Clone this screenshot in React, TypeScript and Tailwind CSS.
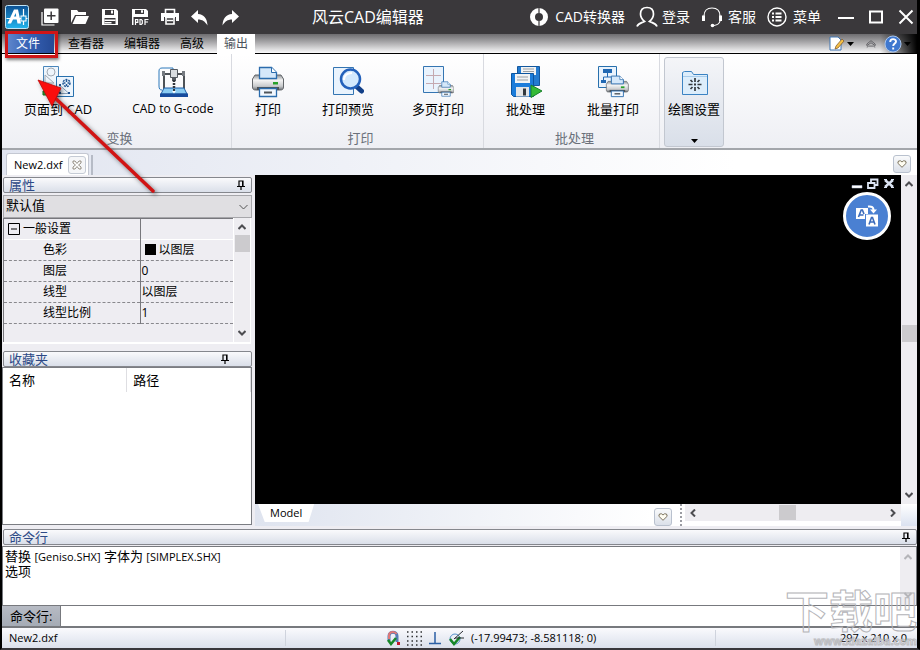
import React from 'react';

const groups = [
  {
    name: '变换',
    className: 'w-[229px] gap-10 pl-[22px]',
    items: [
      { label: '页面到 CAD', icon: <PageToCadIcon /> },
      { label: 'CAD to G-code', icon: <GcodeIcon />, latin: true },
    ],
  },
  {
    name: '打印',
    className: 'w-[251px] gap-[38px] pl-5',
    items: [
      { label: '打印', icon: <PrinterIcon /> },
      { label: '打印预览', icon: <PreviewIcon /> },
      { label: '多页打印', icon: <MultiPageIcon /> },
    ],
  },
  {
    name: '批处理',
    className: 'w-[175px] gap-[42px] pl-[22px]',
    items: [
      { label: '批处理', icon: <BatchIcon /> },
      { label: '批量打印', icon: <BatchPrintIcon /> },
    ],
  },
];

const properties = [
  { name: '色彩', value: '以图层', swatch: true },
  { name: '图层', value: '0' },
  { name: '线型', value: '以图层' },
  { name: '线型比例', value: '1' },
];

export default function App() {
  return (
    <div className="relative flex min-h-screen flex-col overflow-hidden border-r-3 border-b-2 border-l-2 border-black border-b-[#39373c] bg-[#eeedf2] font-['Open_Sans','Noto_Sans_CJK_SC',sans-serif] text-[13px] leading-4 text-black">
      <TitleBar />
      <TabStrip />
      <Ribbon />
      <DocumentTabs />
      <main className="flex flex-1">
        <aside className="flex w-[250px] shrink-0 flex-col pt-[2px] pb-1">
          <PropertiesPanel />
          <FavoritesPanel />
        </aside>
        <Workspace />
      </main>
      <CommandPanel />
      <StatusBar />
      <Watermark />
      <PointerArrow />
    </div>
  );
}

function TitleBar() {
  return (
    <header className="-mr-[3px] flex h-[34px] shrink-0 items-center bg-[#3a383b] pl-[3px] text-white">
      <svg className="h-6 w-6" viewBox="0 0 24 24">
        <defs>
          <linearGradient id="logo" x1="0" y1="0" x2="0" y2="1">
            <stop offset="0" stopColor="#0b4f93" />
            <stop offset="1" stopColor="#22b5ee" />
          </linearGradient>
        </defs>
        <rect x="0.5" y="0.5" width="23" height="23" rx="2" fill="url(#logo)" stroke="#bfe4f7" />
        <path d="M2.500 18.500 9 4.500h4l3 14h-3.500l-.8-4H8l-2 4z" fill="#fff" />
        <path d="M9 11.500h2.200L10.700 8z" fill="#1583c6" />
        <path d="M1.500 13.500h21M18.500 4v16" stroke="#fff" strokeWidth="1.200" />
        <rect x="16" y="11" width="5" height="5" fill="#178fd0" stroke="#fff" />
      </svg>
      <div className="ml-3 flex items-center gap-3">
        <IconButton label="新建">
          <path d="M1 4v13h12.500" fill="none" stroke="#fff" strokeWidth="1.200" />
          <rect x="3" y="0.500" width="14.500" height="14.500" rx="1" fill="#fff" />
          <path d="M10.200 3.500v8.500M6 7.700h8.500" stroke="#3a383b" strokeWidth="1.500" />
        </IconButton>
        <IconButton label="打开">
          <path d="M0 15V2h6l1.500 2H15v3H4z" fill="#fff" />
          <path d="M1.500 16 5 8h13l-3.500 8z" fill="#fff" />
        </IconButton>
        <IconButton label="保存">
          <path d="M1 1h14l2 2v14H1z" fill="#fff" />
          <path d="M4 2h9v5H4zM3.500 10h11v6h-11z" fill="#3a383b" />
          <path d="M10 2.500h2v3h-2zM3.500 11.500h11v1.500h-11zM3.500 14h7v1.500h-7z" fill="#fff" />
        </IconButton>
        <IconButton label="另存为 PDF">
          <path d="M1 1h14l2 2v6H1zM1 9h1.500v8H1z" fill="#fff" />
          <path d="M4 2h9v4H4z" fill="#3a383b" />
          <path d="M10 2.200h2v2.600h-2z" fill="#fff" />
          <path d="M4.500 17v-5.500h2.300v2.800H4.500M9 11.500v5h1.300l1-1v-3l-1-1zM14 17v-5.500h3.500M14 14h3" fill="none" stroke="#fff" strokeWidth="1.200" />
        </IconButton>
        <IconButton label="打印">
          <path d="M4.500 5V1.500h9V5" fill="none" stroke="#fff" strokeWidth="1.600" />
          <path d="M0 5h18v8h-3V9H3v4H0z" fill="#fff" />
          <path d="M4 9.500h10M5 9v7h8V9M6 12.500h6" fill="none" stroke="#fff" strokeWidth="1.600" />
        </IconButton>
        <IconButton label="撤销">
          <path d="M0 8.500 7 2v4c6 .5 9 4 9.500 11.500C14 13.500 11.500 11.500 7 11.500V15z" fill="#fff" />
        </IconButton>
        <IconButton label="重做">
          <path d="M18 8.500 11 2v4C5 6.500 2 10 1.500 17.500 4 13.500 6.500 11.500 11 11.500V15z" fill="#fff" />
        </IconButton>
      </div>
      <h1 className="ml-[73px] text-[16px] leading-6">风云CAD编辑器</h1>
      <nav className="ml-auto flex items-center gap-[11px] text-[14px]">
        <button className="flex items-center gap-[6px]">
          <svg className="h-5 w-5" viewBox="0 0 20 20">
            <circle cx="10" cy="10" r="6.500" fill="none" stroke="#fff" strokeWidth="5" />
            <path d="M10 0v6M10 14v6" stroke="#3a383b" strokeWidth="1.200" />
          </svg>
          <span>CAD转换器</span>
        </button>
        <button className="flex items-center gap-1">
          <svg className="h-[22px] w-[22px]" viewBox="0 0 22 22" fill="none" stroke="#fff" strokeWidth="1.700">
            <path d="M1 20.500c1-3 3.500-3.300 7.500-5C5.500 13 4.500 10.500 4.500 8c0-4 2.500-6.500 6.500-6.500S17.500 4 17.500 8c0 2.500-1 5-4 7.500 4 1.700 6.500 2 7.500 5" />
          </svg>
          <span>登录</span>
        </button>
        <button className="flex items-center gap-[5px]">
          <svg className="h-[22px] w-[22px]" viewBox="0 0 22 22" fill="none" stroke="#fff">
            <path d="M3 10c0-5 3-8 8-8s8 3 8 8" strokeWidth="1.200" />
            <path d="M2.500 9.500v5.500M19.500 9.500v5.500" strokeWidth="3" />
            <path d="M19 15c-.5 2.500-2.500 4-6 4.500" strokeWidth="1.200" />
            <circle cx="11.500" cy="19.500" r="1.800" fill="#fff" stroke="none" />
          </svg>
          <span>客服</span>
        </button>
        <button className="flex items-center gap-[6px]">
          <svg className="h-5 w-5" viewBox="0 0 20 20" fill="none" stroke="#fff">
            <circle cx="10" cy="10" r="9" strokeWidth="1.400" />
            <path d="M5 6.500h2M5 10h2M5 13.500h2M8.500 6.500h6M8.500 10h6M8.500 13.500h6" strokeWidth="2" />
          </svg>
          <span>菜单</span>
        </button>
      </nav>
      <div className="mr-[6px] ml-[17px] flex items-center gap-[14px]">
        <IconButton label="最小化" small>
          <path d="M0 9h16" stroke="#fff" strokeWidth="2" />
        </IconButton>
        <IconButton label="最大化" small>
          <path d="M2 2.500h12v11H2z" fill="none" stroke="#fff" strokeWidth="2" />
        </IconButton>
        <IconButton label="关闭" small>
          <path d="m1.500 1.500 13 13m0-13-13 13" stroke="#fff" strokeWidth="2" />
        </IconButton>
      </div>
    </header>
  );
}

function IconButton({ label, small, children }: { label: string; small?: boolean; children: React.ReactNode }) {
  return (
    <button aria-label={label}>
      <svg className={small ? 'h-4 w-4' : 'h-[18px] w-[18px]'} viewBox={small ? '0 0 16 16' : '0 0 18 18'}>
        {children}
      </svg>
    </button>
  );
}

function TabStrip() {
  return (
    <div className="flex h-5 shrink-0 border-b border-black bg-linear-to-b from-[#6e6d70] to-[#fbfbfc] text-[12px] leading-[18px]">
      <div className="relative mr-1 ml-1 w-12">
        <button className="h-full w-full bg-linear-to-r from-[#6189cd] via-[#3560b4] to-[#254a95] pr-1 text-white">文件</button>
        <div className="pointer-events-none absolute -top-[3px] -right-1 -bottom-[5px] -left-px border-3 border-[#cf1517] shadow-[1px_2px_3px_rgba(0,0,0,0.5)]" />
      </div>
      <button className="px-[10px]">查看器</button>
      <button className="px-[10px]">编辑器</button>
      <button className="px-[10px]">高级</button>
      <button className="-mb-px ml-[3px] bg-white px-[7px] text-[#4c535c]">输出</button>
      <div className="ml-auto flex items-center">
        <button aria-label="界面样式" className="flex items-center gap-[2px]">
          <svg className="h-4 w-4" viewBox="0 0 16 16">
            <path d="M1 1h8l3 3v10H1z" fill="#fff" stroke="#4076b4" />
            <path d="m6 13 1-3 6-7 2 2-6 7z" fill="#f4bf46" stroke="#785126" strokeWidth="0.700" />
          </svg>
          <SmallArrow />
        </button>
        <button aria-label="折叠功能区" className="ml-3">
          <svg className="h-[10px] w-[10px]" viewBox="0 0 12 12" fill="none" stroke="#55555a">
            <path d="m1 6 5-4 5 4v2L6 4.500 1 8zM1 10l2-1.500h6L11 10" />
          </svg>
        </button>
        <button aria-label="帮助" className="ml-1 flex h-full items-center gap-[2px] bg-linear-to-r from-transparent to-black pr-[6px] pl-1">
          <svg className="h-[18px] w-[18px]" viewBox="0 0 18 18">
            <circle cx="9" cy="9" r="8" fill="#3f78cf" stroke="#a9c5ec" />
            <path d="M6.200 7c0-3.800 5.800-3.600 5.800-.5 0 2-2.800 2-2.800 4.500M9.200 12.500v2" fill="none" stroke="#fff" strokeWidth="1.900" />
          </svg>
          <SmallArrow />
        </button>
      </div>
    </div>
  );
}

function SmallArrow() {
  return (
    <svg className="h-[6px] w-[7px]" viewBox="0 0 7 6">
      <path d="M0 1h7L3.500 5z" />
    </svg>
  );
}

function Ribbon() {
  return (
    <section className="flex h-24 shrink-0 border-b-2 border-[#a3a6ab] bg-linear-to-b from-white to-[#eeeff4]">
      {groups.map((group) => (
        <div key={group.name} className="flex flex-col border-r border-[#d8dae0] pt-3">
          <div className={`flex ${group.className}`}>
            {group.items.map((item) => (
              <button key={item.label} className="flex flex-col items-center gap-[3px] whitespace-nowrap">
                {item.icon}
                <span className={item.latin ? 'text-[12px]' : ''}>{item.label}</span>
              </button>
            ))}
          </div>
          <div className="mt-[13px] pl-[6px] text-center text-[#6a707a]">{group.name}</div>
        </div>
      ))}
      <button className="mt-[3px] mb-px ml-1 flex w-[60px] flex-col items-center rounded-[3px] border border-[#c2c7d0] bg-linear-to-b from-[#f4f5f8] to-[#d9dfe9] pt-2">
        <DrawingSettingsIcon />
        <span className="mt-[3px] whitespace-nowrap">绘图设置</span>
        <span className="mt-auto mb-[2px]">
          <SmallArrow />
        </span>
      </button>
    </section>
  );
}

function PageToCadIcon() {
  return (
    <svg className="h-8 w-8" viewBox="0 0 32 32">
      <path d="M1.500.500h15v22h-15z" fill="#eef5fc" stroke="#4a86bb" />
      <circle cx="9" cy="6" r="4" fill="none" stroke="#a2aab4" />
      <path d="M3 9v8h9z" fill="none" stroke="#a2aab4" />
      <path d="M1 25h5v4H1z" fill="#35a334" stroke="#17701e" />
      <path d="M14.500 10.500h17v20h-17z" fill="#edf5fd" stroke="#2870ad" />
      <circle cx="24.500" cy="17" r="3.500" fill="none" stroke="#245a97" strokeWidth="1.500" strokeDasharray="2 1" />
      <path d="M24.500 14v6M21.500 17h6" stroke="#245a97" strokeWidth="1.500" strokeDasharray="2 2" />
      <path d="M18 19.500v8h9z" fill="none" stroke="#8aa1ba" />
      <path d="M17 18h2v2h-2zM17 26h2v2h-2zM26 26h2v2h-2z" fill="#1f518e" />
    </svg>
  );
}

function GcodeIcon() {
  return (
    <svg className="h-8 w-8" viewBox="0 0 32 32">
      <path d="M16 3V2H5C3 2 2 3 2 5v15c0 3 1 4 3 4" fill="none" stroke="#2c79bb" />
      <path d="M7 23V8h20v15" fill="none" stroke="#4d5257" strokeWidth="2" />
      <path d="M5 5h3v5H5zM25 5h3v5h-3z" fill="#757a80" />
      <path d="M13.500 3.500h7v8h-7z" fill="#d8dce0" stroke="#555b62" />
      <path d="M15 12h4v3h-4z" fill="#555b62" />
      <path d="M17 14v11" stroke="#33383d" strokeWidth="2.500" strokeDasharray="2 1" />
      <path d="M7 22h20l3 6H4z" fill="#8acbf2" stroke="#1e5ea6" />
      <path d="M3 27.500h28V31H3z" fill="#174b9d" />
      <path d="M17 17v8" stroke="#33383d" strokeWidth="2" strokeDasharray="2 1" />
      <path d="m15 25 2 2.500 2-2.500" fill="#fff" />
    </svg>
  );
}

function PrinterShape() {
  return (
    <>
      <defs>
        <linearGradient id="printer-body" x1="0" y1="0" x2="0" y2="1">
          <stop offset="0" stopColor="#8f9295" />
          <stop offset="0.35" stopColor="#f4f4f4" />
          <stop offset="0.75" stopColor="#c8cacc" />
          <stop offset="1" stopColor="#6c7074" />
        </linearGradient>
      </defs>
      <path d="M3 9h26l2.500 4v8c0 2-1 3-3 3h-25c-2 0-3-1-3-3v-8z" fill="url(#printer-body)" stroke="#63676b" />
      <path d="M7.500 12.500v-11h12l5 5v6z" fill="#d5e8fa" stroke="#2b6cad" strokeWidth="1.300" />
      <path d="M19.500 1.500v5h5" fill="#fff" stroke="#2b6cad" />
      <path d="M21 16h5v2.500h-5z" fill="#28a12a" />
      <path d="M5 21h22v3H5z" fill="#4e5358" />
      <path d="M7.500 22.500h17v8h-17z" fill="#f2f8ff" stroke="#2b6cad" strokeWidth="1.300" />
      <path d="M12 26.500h8" stroke="#50565c" strokeWidth="2" />
    </>
  );
}

function PrinterIcon() {
  return (
    <svg className="h-8 w-8" viewBox="0 0 32 32">
      <PrinterShape />
    </svg>
  );
}

function PreviewIcon() {
  return (
    <svg className="h-8 w-8" viewBox="0 0 32 32">
      <path d="M1.500 1.500h20v27h-20z" fill="#e9f3fd" stroke="#3475b2" />
      <path d="m24 20 5.500 5" stroke="#123f87" strokeWidth="5" strokeLinecap="round" />
      <circle cx="18.500" cy="13" r="9.500" fill="#d3e9fd" stroke="#2361bb" strokeWidth="2.500" />
      <path d="M12 14c0-5 4-7 8-7" fill="none" stroke="#fff" strokeWidth="2" />
    </svg>
  );
}

function MultiPageIcon() {
  return (
    <svg className="h-8 w-8" viewBox="0 0 32 32">
      <path d="M1.500.500h20v26h-20z" fill="#e9f3fd" stroke="#3475b2" />
      <path d="M11.500 3v20M4 9.500h15M4 17.500h15" stroke="#c4a9b0" />
      <g transform="translate(16 15) scale(.5)">
        <PrinterShape />
      </g>
    </svg>
  );
}

function BatchIcon() {
  return (
    <svg className="h-8 w-8" viewBox="0 0 32 32">
      <path d="M7.500.500h22v19h-22z" fill="#237bd0" stroke="#14589e" />
      <path d="M11 1h15v8H11z" fill="#f1f3f4" />
      <path d="M13 3h11M13 5.500h11" stroke="#999fa4" />
      <path d="M1.500 7.500h22v23h-20l-2-2z" fill="#1b7cda" stroke="#0c559f" />
      <path d="M5 8h15v9H5z" fill="#f1f3f4" />
      <path d="M7 11h11M7 14h11" stroke="#999fa4" />
      <path d="M6 21h13v9.500H6z" fill="#e3e5e7" />
      <path d="M13 22.500h3v7h-3z" fill="#33383d" />
      <path d="m21 19 11 6-11 6.500z" fill="#35ba36" stroke="#17802a" />
    </svg>
  );
}

function BatchPrintIcon() {
  return (
    <svg className="h-8 w-8" viewBox="0 0 32 32">
      <path d="M1.500.500h18v21h-18z" fill="#e9f3fd" stroke="#2870ad" />
      <path d="M6 3h9v4H6zM4 14h5v3H4z" fill="#2068b3" />
      <path d="M10.500 7v4M6.500 14v-3h8v4" fill="none" stroke="#2068b3" />
      <g transform="translate(9 9) scale(.71)">
        <PrinterShape />
      </g>
    </svg>
  );
}

function DrawingSettingsIcon() {
  return (
    <svg className="h-8 w-8" viewBox="0 0 32 32">
      <path d="M4.500 28.500v-22l2-1h7l2 3h14v20z" fill="#dcedfb" stroke="#3b83c3" />
      <path d="M5 10.500h24" stroke="#a8cceb" />
      <path d="M17 12v4M17 21v4M10.500 18.500h4M19.500 18.500h4M12.500 14l2 2M19.500 21l2 2M21.500 14l-2 2M14.500 21l-2 2" stroke="#33383d" strokeWidth="1.700" />
      <path d="M16 17.500h2v2h-2z" fill="#33383d" />
    </svg>
  );
}

function DocumentTabs() {
  return (
    <div className="flex h-[25px] shrink-0 items-end bg-linear-to-r from-[#e1e5f0] to-white to-80% pl-1 text-[11px]">
      <div className="flex h-[22px] items-center rounded-t-[3px] border border-b-0 border-[#c4c8d2] bg-white pr-[2px] pl-[7px]">
        <span>New2.dxf</span>
        <button aria-label="关闭文档" className="ml-[6px] flex h-[18px] w-[18px] items-center justify-center rounded-[3px] border border-[#c5cbd5] bg-[#f5f6f8]">
          <svg className="h-[10px] w-[10px]" viewBox="0 0 10 10">
            <path d="M1 1h2l2 2.500L7 1h2v2L6.500 5 9 7v2H7L5 6.500 3 9H1V7l2.500-2L1 3z" fill="#fff" stroke="#7b7365" strokeWidth="0.800" />
          </svg>
        </button>
      </div>
      <div className="ml-[2px] h-5 w-[2px] bg-[#b6bbc6]" />
      <div className="mr-[6px] mb-[2px] ml-auto">
        <HeartButton label="文档列表" />
      </div>
    </div>
  );
}

function HeartButton({ label }: { label: string }) {
  return (
    <button aria-label={label} className="flex h-[18px] w-[18px] items-center justify-center rounded-[3px] border border-[#b9c1ce] bg-linear-to-b from-[#f9fafb] to-[#dbe0e9]">
      <svg className="h-2 w-[10px]" viewBox="0 0 10 8">
        <path d="M5 7.300.800 3.200 1.500 1l2-.200L5 2l1.500-1.200 2 .200.700 2.200z" fill="#fffdf2" stroke="#706750" strokeWidth="0.900" />
      </svg>
    </button>
  );
}

function PanelHeader({ title, className = '' }: { title: string; className?: string }) {
  return (
    <div className={`flex h-4 shrink-0 items-center justify-between rounded-[2px] border border-[#85878d] bg-linear-to-b from-[#fafafc] to-[#dadfe9] pl-[5px] ${className}`}>
      <h2 className="leading-3 text-[#2d4a86]">{title}</h2>
      <button aria-label={`固定${title}`}>
        <svg className="h-[10px] w-2" viewBox="0 0 8 10">
          <path d="M2 6V1h4v5M0 6.500h8M4 7v3" fill="none" stroke="#000" strokeWidth="1.200" />
          <path d="M5 1h1v5H5z" />
        </svg>
      </button>
    </div>
  );
}

const rotations = { up: '', right: 'rotate-90', down: 'rotate-180', left: '-rotate-90' };

function Chevron({ to, className = 'stroke-[#4c4c50]' }: { to: keyof typeof rotations; className?: string }) {
  return (
    <svg className={`h-2 w-2 ${rotations[to]} ${className}`} viewBox="0 0 8 8" fill="none" strokeWidth="2">
      <path d="m.500 6 3.500-3.500L7.500 6" />
    </svg>
  );
}

function PropertiesPanel() {
  return (
    <section className="flex shrink-0 flex-col pl-px">
      <PanelHeader title="属性" className="pr-[6px]" />
      <div className="relative mt-[2px]">
        <select aria-label="对象选择" className="h-[23px] w-full appearance-none border border-[#a6a6aa] bg-[#e0dfe2] pb-[3px] pl-[2px]">
          <option>默认值</option>
        </select>
        <svg className="pointer-events-none absolute top-2 right-1 h-2 w-[9px]" viewBox="0 0 9 8" fill="none" stroke="#555">
          <path d="m.500 2 4 4 4-4" />
        </svg>
      </div>
      <div className="mr-px flex h-[126px] border-b-2 border-white">
        <div className="flex-1 border-t border-l border-[#77777c]">
          <table className="w-full table-fixed border-collapse text-[12px]">
            <tbody>
              <tr className="h-5 border-b border-white">
                <th scope="row" className="w-[136px] border-r border-[#77777c] border-b-white p-0 text-left font-normal">
                  <button className="flex items-center gap-[3px] pl-1">
                    <svg className="h-3 w-3" viewBox="0 0 12 12" fill="none" stroke="#000">
                      <path d="M.500.500h11v11H.500zM3 6h6" />
                    </svg>
                    <span>一般设置</span>
                  </button>
                </th>
                <td className="p-0" />
              </tr>
              {properties.map((property) => (
                <tr key={property.name} className="h-[21px]">
                  <th scope="row" className="border-r border-b border-[#77777c] border-b-[#88888d] p-0 pl-[39px] text-left font-normal [border-bottom-style:dashed]">{property.name}</th>
                  <td className="border-b border-dashed border-[#88888d] p-0 pl-px">
                    <div className="flex items-center">
                      {property.swatch && <span className="mr-[3px] ml-[3px] h-[11px] w-[11px] bg-black" />}
                      {property.value}
                    </div>
                  </td>
                </tr>
              ))}
            </tbody>
          </table>
        </div>
        <div className="flex w-[18px] flex-col items-center border-x border-white bg-[#eeedf1] py-[5px]">
          <Chevron to="up" />
          <div className="mt-1 h-[17px] w-[15px] bg-[#cccbce]" />
          <Chevron to="down" className="mt-auto stroke-[#4c4c50]" />
        </div>
      </div>
    </section>
  );
}

function FavoritesPanel() {
  return (
    <section className="flex flex-1 flex-col pt-[7px]">
      <PanelHeader title="收藏夹" className="ml-px pr-[22px]" />
      <div className="flex-1 border border-[#7b7d82] bg-white">
        <table className="w-full table-fixed border-collapse">
          <thead>
            <tr className="h-6">
              <th className="border-r border-[#dedee2] p-0 pl-[6px] text-left font-normal">名称</th>
              <th className="border-r border-[#dedee2] p-0 pl-[6px] text-left font-normal">路径</th>
            </tr>
          </thead>
        </table>
      </div>
    </section>
  );
}

function Workspace() {
  return (
    <section className="flex flex-1 flex-col pb-[3px] pl-[3px]">
      <div className="flex flex-1">
        <div className="flex flex-1 flex-col items-end bg-black pt-[3px]">
          <div className="flex gap-1 pr-[6px]">
            <CanvasButton label="最小化图形">
              <path d="M1 7.500h10v2.500H1z" fill="#fff" stroke="#b8c5df" strokeWidth="0.500" />
            </CanvasButton>
            <CanvasButton label="还原图形">
              <path d="M4 4V1.500h6.500V7H8M1 5h6.500v5H1z" fill="none" stroke="#dbe3f2" strokeWidth="1.800" />
            </CanvasButton>
            <CanvasButton label="关闭图形">
              <path d="m2 2 8 7m0-7L2 9" stroke="#dbe3f2" strokeWidth="2.500" />
              <path d="M1 1.500h3M8 1.500h3M1 9.500h3M8 9.500h3" stroke="#dbe3f2" />
            </CanvasButton>
          </div>
          <button aria-label="翻译" className="mt-[3px] mr-[10px] flex h-12 w-12 items-center justify-center rounded-full border-3 border-white bg-[#4a80d2]">
            <svg className="h-6 w-6" viewBox="0 0 24 24">
              <path d="M1 4h12v6h-3v5H1z" fill="#fff" />
              <path d="M11 10.500h12v12H11z" fill="#fff" />
              <path d="m3.500 13 2.700-7h1.200L9 10M4.500 11h4M14 20.500l2.500-7h1l2.500 7M15 18h4" fill="none" stroke="#3c6cbc" strokeWidth="1.600" />
              <path d="M13 2.500c4-.5 5.500 1 5.500 3.500" fill="none" stroke="#fff" strokeWidth="2" />
              <path d="M15 5.500h7l-3.500 4z" fill="#fff" />
            </svg>
          </button>
        </div>
        <div className="flex w-4 flex-col items-center bg-[#eeedf1] py-[5px]">
          <Chevron to="up" />
          <div className="flex-12" />
          <div className="h-[17px] w-[15px] bg-[#cccbce]" />
          <div className="flex-13" />
          <Chevron to="down" />
        </div>
      </div>
      <div className="flex h-[22px] shrink-0 bg-linear-to-r from-[#dfe4ef] to-white to-60%">
        <div className="ml-[3px]">
          <button className="h-[18px] bg-white pr-3 pl-3 text-[11px] [clip-path:polygon(0_0,100%_0,90%_100%,12%_100%)]">Model</button>
        </div>
        <div className="mt-1 ml-auto">
          <HeartButton label="布局列表" />
        </div>
        <div className="mr-[3px] ml-2 border-l-2 border-dotted border-[#9b9ca2]" />
        <div className="flex h-[17px] w-[216px] items-center bg-[#eeedf1] px-1">
          <Chevron to="left" />
          <div className="flex-7" />
          <div className="h-[15px] w-[17px] bg-[#cccbce]" />
          <div className="flex-8" />
          <Chevron to="right" />
        </div>
        <div className="w-4 bg-linear-to-b from-white to-[#dbe2f0]" />
      </div>
    </section>
  );
}

function CanvasButton({ label, children }: { label: string; children: React.ReactNode }) {
  return (
    <button aria-label={label}>
      <svg className="h-[11px] w-3" viewBox="0 0 12 11">
        {children}
      </svg>
    </button>
  );
}

function CommandPanel() {
  return (
    <section className="shrink-0">
      <PanelHeader title="命令行" className="ml-px pr-[6px]" />
      <div className="mt-px flex h-[60px] justify-between border border-[#77797e] bg-white">
        <div className="pt-[2px] pl-[2px] leading-[15px]">
          <p>
            替换 <span className="text-[11px]">[Geniso.SHX]</span> 字体为 <span className="text-[11px]">[SIMPLEX.SHX]</span>
          </p>
          <p>选项</p>
        </div>
        <div className="flex w-4 flex-col items-center justify-between bg-[#eeedf1] py-[6px]">
          <Chevron to="up" className="stroke-[#b5b5b9]" />
          <Chevron to="down" className="stroke-[#b5b5b9]" />
        </div>
      </div>
      <div className="flex h-[22px] border-b-2 border-[#77797e]">
        <label htmlFor="command" className="w-[59px] border-r border-[#77797e] bg-linear-to-b from-[#b7bbc4] to-[#a5abb5] pl-2 leading-5">命令行:</label>
        <input id="command" type="text" className="min-w-0 flex-1 bg-white px-1 outline-none" />
      </div>
    </section>
  );
}

function StatusBar() {
  return (
    <footer className="flex h-5 shrink-0 items-center bg-linear-to-b from-[#fafafd] to-[#dbe0ec] text-[11px]">
      <div className="w-[284px] border-r border-[#cfd3dd] pl-[7px]">New2.dxf</div>
      <div className="flex flex-1 items-center gap-[5px] border-r border-[#cfd3dd] pl-[99px]">
        <button aria-label="对象捕捉">
          <svg className="h-4 w-4" viewBox="0 0 16 16" fill="none">
            <path d="M4 11V6c0-5 8-5 8 0v6" stroke="#567cb5" strokeWidth="3" />
            <path d="M4 9V5.500C4 3 6 2 8 2s3 1 3.500 2" stroke="#df7777" strokeWidth="2" />
            <path d="m3 10 3 4 5-6" stroke="#168728" strokeWidth="2.500" />
            <path d="M12 12h3v3h-3z" fill="#c4152b" />
          </svg>
        </button>
        <button aria-label="栅格">
          <svg className="h-4 w-4" viewBox="0 0 16 16">
            <path d="M1 2h15M1 6.500h15M1 11h15M1 15h15" stroke="#2f3033" strokeWidth="1.500" strokeDasharray="1.500 3" />
          </svg>
        </button>
        <button aria-label="正交">
          <svg className="h-4 w-4" viewBox="0 0 16 16">
            <path d="M8 2v11M2 13.500h12" stroke="#2b5fa5" strokeWidth="1.500" />
          </svg>
        </button>
        <button aria-label="对象追踪">
          <svg className="h-4 w-4" viewBox="0 0 16 16" fill="none">
            <circle cx="7" cy="9" r="5" stroke="#5590c9" />
            <path d="m2 9 4 5 6-7" stroke="#168728" strokeWidth="2.500" />
            <path d="M6 9 15 1M7 8h9" stroke="#292d33" />
          </svg>
        </button>
        <span className="ml-[2px]">(-17.99473; -8.581118; 0)</span>
      </div>
      <div className="w-[201px] pr-[10px] text-right">297 x 210 x 0</div>
    </footer>
  );
}

function Watermark() {
  return (
    <div className="pointer-events-none absolute right-0 bottom-0 text-right font-bold text-transparent">
      <div className="text-[44px] leading-[46px] [-webkit-text-stroke:1px_#b4b4b8]">下载吧</div>
      <div className="text-[11px] leading-[14px] [-webkit-text-stroke:1px_#bcbcc0]">www.xiazaiba.com</div>
    </div>
  );
}

function PointerArrow() {
  return (
    <svg className="pointer-events-none absolute top-[76px] left-[33px] h-[124px] w-[128px] drop-shadow-[2px_2px_2px_rgba(0,0,0,0.5)]" viewBox="0 0 128 124">
      <path d="M17 19 118 115" stroke="#d11414" strokeWidth="3.500" strokeLinecap="round" />
      <path d="M3 4 26 12 17 30z" fill="#fb0d0d" stroke="#bd0909" strokeWidth="0.800" />
    </svg>
  );
}
